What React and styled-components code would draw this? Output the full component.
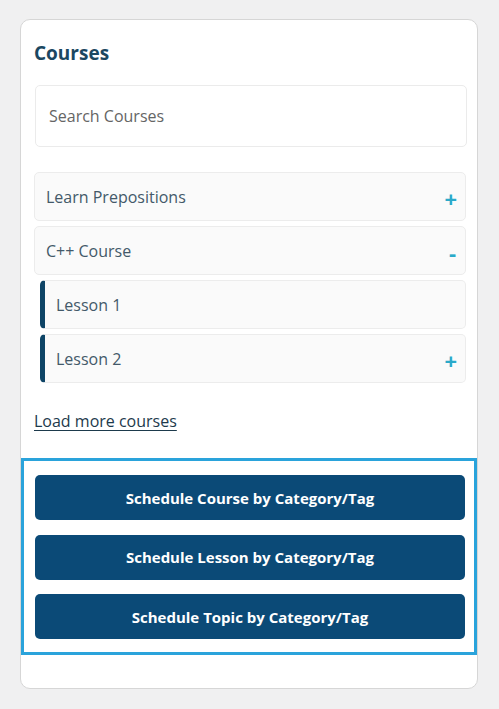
import React, { useState } from 'react';
import styled, { createGlobalStyle } from 'styled-components';

const GlobalStyle = createGlobalStyle`
  body {
    margin: 0;
    background: #f0f0f1;
    font-family: "Open Sans", "Segoe UI", sans-serif;
  }
`;

const courses = [
  { title: 'Learn Prepositions', lessons: [] },
  { title: 'C++ Course', lessons: [{ title: 'Lesson 1', expandable: false }, { title: 'Lesson 2', expandable: true }] },
];

const actions = [
  'Schedule Course by Category/Tag',
  'Schedule Lesson by Category/Tag',
  'Schedule Topic by Category/Tag',
];

const App = () => {
  const [open, setOpen] = useState({ 'C++ Course': true });

  const toggle = (title) => setOpen((prev) => ({ ...prev, [title]: !prev[title] }));

  return (
    <Page>
      <GlobalStyle />
      <Card>
        <Heading>Courses</Heading>
        <SearchInput placeholder="Search Courses" />
        <List>
          {courses.map((course) => (
            <React.Fragment key={course.title}>
              <Item onClick={() => toggle(course.title)}>
                <ItemLabel>{course.title}</ItemLabel>
                <Toggle $minus={open[course.title]}>{open[course.title] ? '-' : '+'}</Toggle>
              </Item>
              {open[course.title] &&
                course.lessons.map((lesson) => (
                  <Item key={lesson.title} $lesson>
                    <ItemLabel>{lesson.title}</ItemLabel>
                    {lesson.expandable && <Toggle>+</Toggle>}
                  </Item>
                ))}
            </React.Fragment>
          ))}
        </List>
        <LoadMore href="#">Load more courses</LoadMore>
        <ActionBox>
          {actions.map((label) => (
            <ActionButton key={label}>{label}</ActionButton>
          ))}
        </ActionBox>
      </Card>
    </Page>
  );
};

const Page = styled.div`
  padding: 19px 21px 21px 20px;
`;

const Card = styled.div`
  background: #fff;
  border: 1px solid #d6d6d6;
  border-radius: 10px;
  padding: 20px 0 32px 0;
  box-sizing: border-box;
  height: 670px;
`;

const Heading = styled.h2`
  margin: 0 0 19px 13px;
  font-size: 19px;
  line-height: 26px;
  font-weight: 700;
  color: #1b4761;
`;

const SearchInput = styled.input`
  display: block;
  box-sizing: border-box;
  width: 432px;
  height: 62px;
  margin-left: 14px;
  padding: 0 13px;
  border: 1px solid #ebebeb;
  border-radius: 5px;
  font-family: inherit;
  font-size: 16px;
  color: #333;
  outline: none;

  &::placeholder {
    color: #656565;
  }
`;

const List = styled.div`
  display: flex;
  flex-direction: column;
  gap: 5px;
  margin: 25px 11px 0 13px;
`;

const Item = styled.div`
  display: flex;
  align-items: center;
  justify-content: space-between;
  box-sizing: border-box;
  height: 49px;
  margin-left: ${(p) => (p.$lesson ? '6px' : '0')};
  padding: 0 8px 0 11px;
  background: #fafafa;
  border: 1px solid #ececec;
  border-left: ${(p) => (p.$lesson ? '5px solid #0e4466' : '1px solid #ececec')};
  border-radius: 5px;
  cursor: pointer;
`;

const ItemLabel = styled.span`
  font-size: 16px;
  color: #435969;
`;

const Toggle = styled.span`
  font-size: 22px;
  font-weight: 700;
  line-height: 1;
  color: #2aa9c9;
  margin-top: 3px;
  margin-right: ${(p) => (p.$minus ? '1px' : '0')};
`;

const LoadMore = styled.a`
  display: inline-block;
  margin: 27px 0 0 13px;
  font-size: 16px;
  color: #1d3a4c;
  text-decoration: underline;
  text-underline-offset: 3px;
`;

const ActionBox = styled.div`
  display: flex;
  flex-direction: column;
  gap: 14.5px;
  margin-top: 26px;
  padding: 14px 9px 13px 11px;
  border: 3px solid #2aa3db;
`;

const ActionButton = styled.button`
  height: 45px;
  background: #0b4a77;
  border: none;
  border-radius: 5px;
  color: #fff;
  font-family: inherit;
  font-size: 15px;
  font-weight: 700;
  cursor: pointer;
`;

export default App;
